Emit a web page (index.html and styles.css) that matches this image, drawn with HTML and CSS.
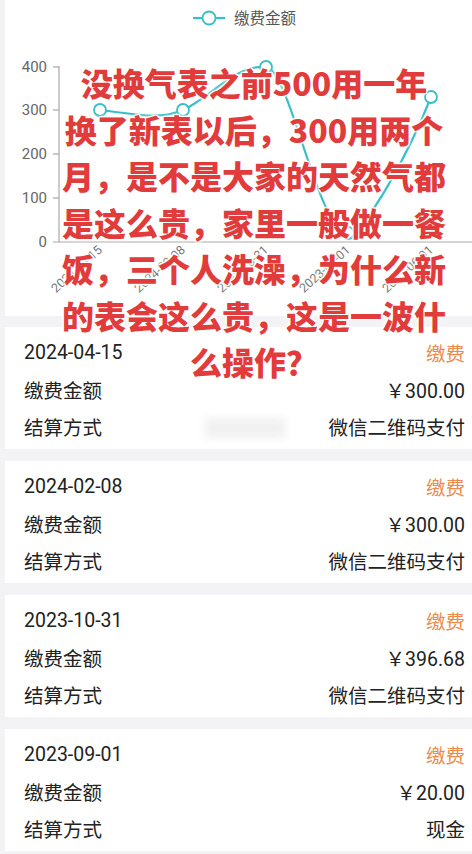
FILE: index.html
```html
<!DOCTYPE html>
<html lang="zh-CN">
<head>
    <meta charset="UTF-8">
    <meta name="viewport" content="width=device-width, initial-scale=1.0">
    <title>缴费记录</title>
    <link rel="stylesheet" href="styles.css">
</head>
<body>
    <div class="page">
        <div class="chart-box">
            <svg class="chart" viewBox="5 0 467 316" width="467" height="316">
                <!-- 图例 -->
                <line x1="193" y1="18" x2="225" y2="18" class="series-line"/>
                <circle cx="209" cy="18" r="6.5" class="dot"/>
                <text x="234" y="24" class="legend-text">缴费金额</text>

                <!-- y 轴 -->
                <line x1="59" y1="66" x2="59" y2="242" class="axis"/>
                <line x1="53" y1="67" x2="59" y2="67" class="axis"/>
                <line x1="53" y1="110" x2="59" y2="110" class="axis"/>
                <line x1="53" y1="154" x2="59" y2="154" class="axis"/>
                <line x1="53" y1="198" x2="59" y2="198" class="axis"/>
                <line x1="53" y1="242" x2="472" y2="242" class="axis"/>
                <text x="47" y="72" class="y-label">400</text>
                <text x="47" y="115" class="y-label">300</text>
                <text x="47" y="159" class="y-label">200</text>
                <text x="47" y="203" class="y-label">100</text>
                <text x="47" y="247" class="y-label">0</text>

                <!-- x 轴标签 -->
                <text class="x-label" transform="translate(103 251) rotate(-42)">2024-04-15</text>
                <text class="x-label" transform="translate(186 251) rotate(-42)">2024-02-08</text>
                <text class="x-label" transform="translate(269 251) rotate(-42)">2023-10-31</text>
                <text class="x-label" transform="translate(351 251) rotate(-42)">2023-09-01</text>
                <text class="x-label" transform="translate(434 251) rotate(-42)">2023-06-01</text>

                <!-- 折线 -->
                <path class="series-line" d="M100,110 C130,113 158,121 183,110 C210,98 236,64 266,67 C290,69 318,233 348,233 C366,233 410,150 431,97"/>
                <circle cx="100" cy="110" r="6" class="dot"/>
                <circle cx="183" cy="110" r="6" class="dot"/>
                <circle cx="266" cy="67" r="6" class="dot"/>
                <circle cx="348" cy="233" r="6" class="dot"/>
                <circle cx="431" cy="97" r="6" class="dot"/>
            </svg>
        </div>

        <div class="record">
            <div class="row"><span>2024-04-15</span><span class="type">缴费</span></div>
            <div class="row"><span>缴费金额</span><span>￥300.00</span></div>
            <div class="row"><span>结算方式</span><span>微信二维码支付</span></div>
        </div>
        <div class="record">
            <div class="row"><span>2024-02-08</span><span class="type">缴费</span></div>
            <div class="row"><span>缴费金额</span><span>￥300.00</span></div>
            <div class="row"><span>结算方式</span><span>微信二维码支付</span></div>
        </div>
        <div class="record">
            <div class="row"><span>2023-10-31</span><span class="type">缴费</span></div>
            <div class="row"><span>缴费金额</span><span>￥396.68</span></div>
            <div class="row"><span>结算方式</span><span>微信二维码支付</span></div>
        </div>
        <div class="record">
            <div class="row"><span>2023-09-01</span><span class="type">缴费</span></div>
            <div class="row"><span>缴费金额</span><span>￥20.00</span></div>
            <div class="row"><span>结算方式</span><span>现金</span></div>
        </div>

        <!-- 打码的水印 -->
        <div class="smudge"></div>

        <!-- 叠在截图上的大字 -->
        <div class="caption">没换气表之前500用一年<br>换了新表以后，300用两个<br>月，是不是大家的天然气都<br>是这么贵，家里一般做一餐<br>饭，三个人洗澡，为什么新<br>的表会这么贵，这是一波什<br>么操作？</div>
    </div>
</body>
</html>
```

FILE: styles.css
```css
/* 基本样式 */
body {
    margin: 0;
    background-color: #f3f3f5;
    font-family: Roboto, "Noto Sans CJK SC", sans-serif;
}

.page {
    position: relative;
    padding: 0 0 3px 5px;
}

.chart-box {
    background-color: #fff;
    height: 316px;
    margin-bottom: 11px;
}

.chart {
    display: block;
}

.axis {
    stroke: #a9a9a9;
    stroke-width: 1.2;
}

.series-line {
    fill: none;
    stroke: #36bfc6;
    stroke-width: 2.2;
}

.dot {
    fill: #fff;
    stroke: #36bfc6;
    stroke-width: 1.8;
}

.legend-text {
    font-family: "Noto Sans CJK SC", sans-serif;
    font-size: 15.5px;
    fill: #555;
}

.y-label {
    font-family: Roboto, sans-serif;
    font-size: 15px;
    fill: #666;
    text-anchor: end;
}

.x-label {
    font-family: Roboto, sans-serif;
    font-size: 12.5px;
    fill: #777;
    text-anchor: end;
}

/* 缴费记录卡片 */
.record {
    background-color: #fff;
    padding: 7px 7px 4px 19px;
    margin-bottom: 12px;
}

.record:last-of-type {
    margin-bottom: 0;
}

.row {
    display: flex;
    justify-content: space-between;
    align-items: center;
    height: 37px;
    font-size: 19.5px;
    color: #222;
}

.type {
    color: #ec8b4c;
}

.smudge {
    position: absolute;
    left: 205px;
    top: 418px;
    width: 80px;
    height: 20px;
    background-color: #f0f0f0;
    filter: blur(4px);
}

.caption {
    position: absolute;
    left: 48px;
    top: 59px;
    width: 412px;
    text-align: center;
    font-family: "Noto Sans CJK SC", sans-serif;
    font-weight: 900;
    font-size: 32px;
    line-height: 46.5px;
    color: #e23b3b;
    text-shadow: 0 0 2px #fff, 1px 1px 1px #fff, -1px -1px 1px #fff, 1px -1px 1px #fff, -1px 1px 1px #fff, 0 0 5px rgba(255, 255, 255, 0.9);
}
```
